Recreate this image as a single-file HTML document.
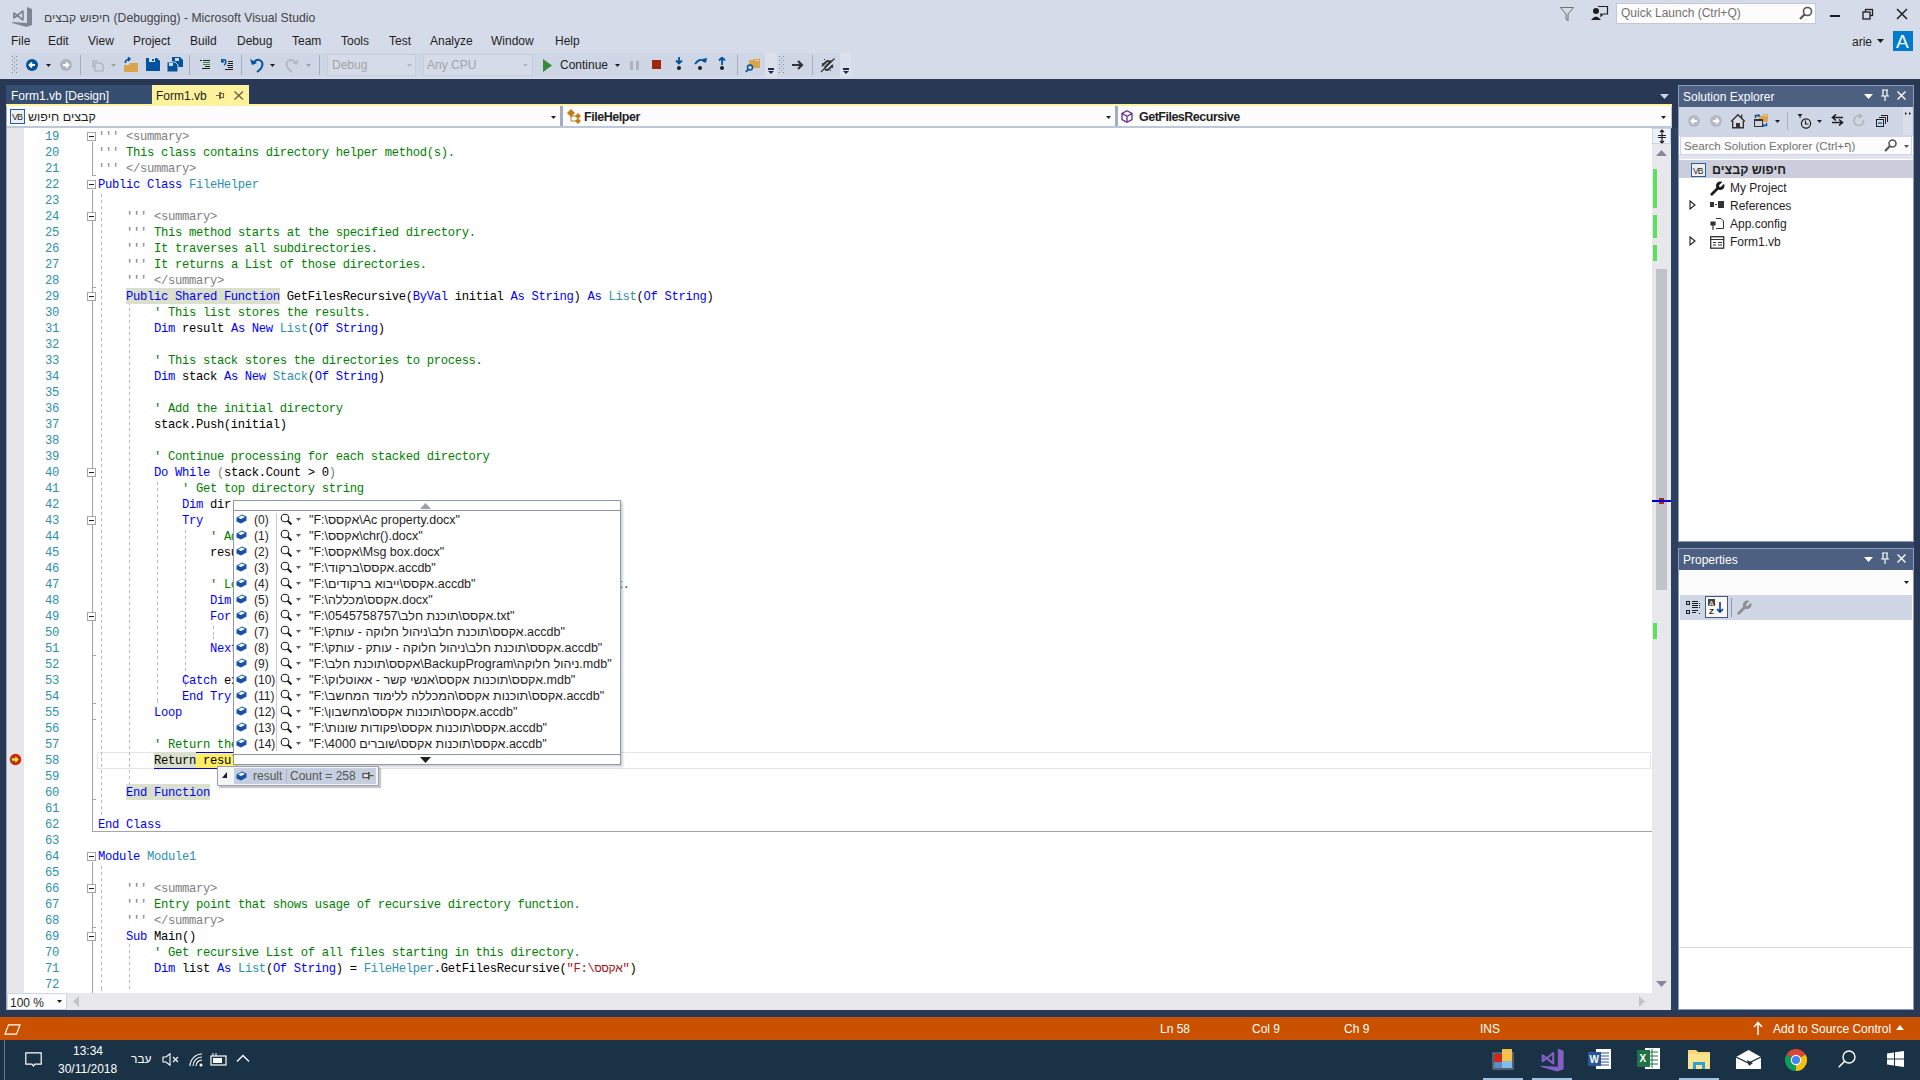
<!DOCTYPE html><html><head><meta charset="utf-8"><style>
*{margin:0;padding:0;box-sizing:border-box}
html,body{width:1920px;height:1080px;overflow:hidden;background:#293955;font-family:"Liberation Sans",sans-serif;font-size:12px;color:#1E1E1E}
.a{position:absolute;white-space:nowrap}
.code{font-family:"Liberation Mono",monospace;font-size:12.2px;letter-spacing:-0.321px;white-space:pre;line-height:16px}
.k{color:#0000FF}.t{color:#2B91AF}.c{color:#008000}.g{color:#808080}.s{color:#A31515}.p{color:#000}
.ln{color:#2B91AF;text-align:right;width:35px}
</style></head><body>
<div class="a" style="left:0px;top:0px;width:1920px;height:79px;background:#D6DBE9;"></div>
<svg class="a" style="left:8px;top:4px;" width="30" height="26" viewBox="0 0 30 26"><path d="M19 3 L24 5 V21 L18.5 23 L4 19 V18 L19 19Z" fill="#80848F"/><path d="M5.8 9 V14 L9.3 11.5Z M9.3 11.5 L15 7 V16Z" fill="none" stroke="#80848F" stroke-width="1.6" stroke-linejoin="round"/></svg>
<div class="a " style="left:44px;top:11px;font-size:12.2px;color:#444">חיפוש קבצים (Debugging) - Microsoft Visual Studio</div>
<div class="a " style="left:11px;top:34px;font-size:12px;color:#1E1E1E">File</div>
<div class="a " style="left:48px;top:34px;font-size:12px;color:#1E1E1E">Edit</div>
<div class="a " style="left:88px;top:34px;font-size:12px;color:#1E1E1E">View</div>
<div class="a " style="left:133px;top:34px;font-size:12px;color:#1E1E1E">Project</div>
<div class="a " style="left:190px;top:34px;font-size:12px;color:#1E1E1E">Build</div>
<div class="a " style="left:237px;top:34px;font-size:12px;color:#1E1E1E">Debug</div>
<div class="a " style="left:292px;top:34px;font-size:12px;color:#1E1E1E">Team</div>
<div class="a " style="left:341px;top:34px;font-size:12px;color:#1E1E1E">Tools</div>
<div class="a " style="left:389px;top:34px;font-size:12px;color:#1E1E1E">Test</div>
<div class="a " style="left:430px;top:34px;font-size:12px;color:#1E1E1E">Analyze</div>
<div class="a " style="left:491px;top:34px;font-size:12px;color:#1E1E1E">Window</div>
<div class="a " style="left:555px;top:34px;font-size:12px;color:#1E1E1E">Help</div>
<svg class="a" style="left:1559px;top:6px;" width="16" height="16" viewBox="0 0 16 16"><path d="M1.5 1.5 H14.5 L9 8 V15 L7 13 V8 Z" fill="none" stroke="#717171" stroke-width="1"/></svg>
<svg class="a" style="left:1591px;top:5px;" width="18" height="16" viewBox="0 0 18 16"><circle cx="5" cy="6" r="3" fill="#1E1E1E"/><path d="M0 15 Q5 8 10 15Z" fill="#1E1E1E"/><path d="M7 1.5 H16.5 V9 H12 L10 11 V9 H9" fill="none" stroke="#1E1E1E" stroke-width="1.2"/></svg>
<div class="a" style="left:1616px;top:3px;width:200px;height:21px;background:#FCFCFC;border:1px solid #C2C8D6"></div>
<div class="a " style="left:1621px;top:6px;font-size:12px;color:#717171">Quick Launch (Ctrl+Q)</div>
<svg class="a" style="left:1799px;top:6px;" width="14" height="14" viewBox="0 0 14 14"><circle cx="8.5" cy="5.5" r="4" fill="none" stroke="#555" stroke-width="1.6"/><path d="M5.5 8.5 L1 13" stroke="#555" stroke-width="2.2"/></svg>
<div class="a" style="left:1830px;top:15px;width:10px;height:2px;background:#1E1E1E;"></div>
<svg class="a" style="left:1862px;top:8px;" width="12" height="12" viewBox="0 0 12 12"><rect x="3.5" y="1.5" width="7" height="6" fill="none" stroke="#1E1E1E" stroke-width="1.3"/><rect x="1" y="4" width="7" height="7" fill="#D6DBE9" stroke="#1E1E1E" stroke-width="1.3"/></svg>
<svg class="a" style="left:1896px;top:8px;" width="12" height="12" viewBox="0 0 12 12"><path d="M1 1 L11 11 M11 1 L1 11" stroke="#1E1E1E" stroke-width="1.5"/></svg>
<div class="a " style="left:1852px;top:35px;font-size:12px;color:#1E1E1E">arie</div>
<svg class="a" style="left:1877px;top:39px;" width="8" height="5" viewBox="0 0 8 5"><path d="M0 0 H7 L3.5 4Z" fill="#1E1E1E"/></svg>
<div class="a" style="left:1893px;top:31px;width:20px;height:20px;background:#007ACC;"></div>
<div class="a " style="left:1896px;top:31px;font-size:19px;color:#fff;font-weight:normal">A</div>
<div class="a" style="left:10px;top:53px;width:755px;height:24px;background:#CFD6E5;"></div>
<div class="a" style="left:765px;top:53px;width:12px;height:24px;background:#DDE1EC;"></div>
<div class="a" style="left:777px;top:53px;width:63px;height:24px;background:#CFD6E5;"></div>
<div class="a" style="left:840px;top:53px;width:11px;height:24px;background:#DDE1EC;"></div>
<svg class="a" style="left:12px;top:56px;" width="5" height="18" viewBox="0 0 5 18"><rect x="0" y="0" width="1" height="1" fill="#7D8597"/><rect x="4" y="0" width="1" height="1" fill="#7D8597"/><rect x="2" y="2" width="1" height="1" fill="#7D8597"/><rect x="0" y="4" width="1" height="1" fill="#7D8597"/><rect x="4" y="4" width="1" height="1" fill="#7D8597"/><rect x="2" y="6" width="1" height="1" fill="#7D8597"/><rect x="0" y="8" width="1" height="1" fill="#7D8597"/><rect x="4" y="8" width="1" height="1" fill="#7D8597"/><rect x="2" y="10" width="1" height="1" fill="#7D8597"/><rect x="0" y="12" width="1" height="1" fill="#7D8597"/><rect x="4" y="12" width="1" height="1" fill="#7D8597"/><rect x="2" y="14" width="1" height="1" fill="#7D8597"/><rect x="0" y="16" width="1" height="1" fill="#7D8597"/><rect x="4" y="16" width="1" height="1" fill="#7D8597"/></svg>
<svg class="a" style="left:779px;top:56px;" width="5" height="18" viewBox="0 0 5 18"><rect x="0" y="0" width="1" height="1" fill="#7D8597"/><rect x="4" y="0" width="1" height="1" fill="#7D8597"/><rect x="2" y="2" width="1" height="1" fill="#7D8597"/><rect x="0" y="4" width="1" height="1" fill="#7D8597"/><rect x="4" y="4" width="1" height="1" fill="#7D8597"/><rect x="2" y="6" width="1" height="1" fill="#7D8597"/><rect x="0" y="8" width="1" height="1" fill="#7D8597"/><rect x="4" y="8" width="1" height="1" fill="#7D8597"/><rect x="2" y="10" width="1" height="1" fill="#7D8597"/><rect x="0" y="12" width="1" height="1" fill="#7D8597"/><rect x="4" y="12" width="1" height="1" fill="#7D8597"/><rect x="2" y="14" width="1" height="1" fill="#7D8597"/><rect x="0" y="16" width="1" height="1" fill="#7D8597"/><rect x="4" y="16" width="1" height="1" fill="#7D8597"/></svg>
<svg class="a" style="left:26px;top:59px;" width="12" height="12" viewBox="0 0 12 12"><circle cx="6" cy="6" r="6" fill="#00539C"/><path d="M9 6 H4 M6 3.5 L3.5 6 L6 8.5" stroke="#fff" stroke-width="1.8" fill="none"/></svg>
<svg class="a" style="left:46px;top:64px;" width="6" height="4" viewBox="0 0 6 4"><path d="M0 0 H5 L2.5 3Z" fill="#1E1E1E"/></svg>
<svg class="a" style="left:60px;top:59px;" width="12" height="12" viewBox="0 0 12 12"><circle cx="6" cy="6" r="6" fill="#AEB3BD"/><path d="M3 6 H8 M6 3.5 L8.5 6 L6 8.5" stroke="#fff" stroke-width="1.8" fill="none"/></svg>
<div class="a" style="left:80px;top:55px;width:1px;height:20px;background:#A5AEBE;"></div>
<svg class="a" style="left:90px;top:58px;" width="14" height="14" viewBox="0 0 14 14"><path d="M5 5 H11 L13 7 V13 H5Z M8 3 H3 V10" fill="none" stroke="#A8ADB8" stroke-width="1.2"/></svg>
<svg class="a" style="left:111px;top:64px;" width="6" height="4" viewBox="0 0 6 4"><path d="M0 0 H5 L2.5 3Z" fill="#9A9FA9"/></svg>
<svg class="a" style="left:123px;top:57px;" width="16" height="16" viewBox="0 0 16 16"><path d="M1 8 H6 L7 6 H15 V15 H1Z" fill="#DCA34F"/><path d="M2 6 Q3 2 7 2 M5 0 L7 2 L5 4" fill="none" stroke="#00539C" stroke-width="1.5"/></svg>
<svg class="a" style="left:146px;top:57px;" width="14" height="14" viewBox="0 0 14 14"><path d="M0 1 H11 L14 4 V14 H0Z" fill="#00539C"/><rect x="3" y="1" width="6" height="4" fill="#D6DBE9"/><rect x="6" y="2" width="2" height="2" fill="#00539C"/></svg>
<svg class="a" style="left:167px;top:57px;" width="16" height="15" viewBox="0 0 16 15"><path d="M5 0 H13 L16 3 V10 H5Z" fill="#00539C"/><path d="M0 5 H8 L11 8 V15 H0Z" fill="#00539C" stroke="#CFD6E5" stroke-width="1"/><rect x="8" y="1" width="4" height="3" fill="#D6DBE9"/><rect x="2" y="6" width="4" height="3" fill="#D6DBE9"/></svg>
<div class="a" style="left:189px;top:55px;width:1px;height:20px;background:#A5AEBE;"></div>
<svg class="a" style="left:195px;top:54px;" width="45" height="22" viewBox="0 0 45 22"><rect x="5" y="6" width="2" height="1" fill="#1E1E1E"/><rect x="8" y="6" width="7" height="1" fill="#1E1E1E"/><rect x="8" y="8" width="7" height="1" fill="#388A34"/><rect x="8" y="10" width="7" height="1" fill="#388A34"/><rect x="10" y="12" width="5" height="1" fill="#1E1E1E"/><rect x="7" y="14" width="8" height="1" fill="#1E1E1E"/><rect x="33" y="7" width="5" height="1" fill="#1E1E1E"/><rect x="33" y="9" width="5" height="1" fill="#1E1E1E"/><rect x="32" y="11" width="6" height="1" fill="#1E1E1E"/><rect x="33" y="13" width="5" height="1" fill="#1E1E1E"/><rect x="30" y="15" width="8" height="1" fill="#1E1E1E"/><path d="M27 6 Q31 5 31 8 Q31 10 29 11" fill="none" stroke="#00539C" stroke-width="1.4"/><path d="M26 4.5 V8.5 H30Z" fill="#00539C"/></svg>
<div class="a" style="left:241px;top:55px;width:1px;height:20px;background:#A5AEBE;"></div>
<svg class="a" style="left:250px;top:57px;" width="14" height="16" viewBox="0 0 14 16"><path d="M3 6 Q8 0 12 5 Q14 10 7 15" fill="none" stroke="#00539C" stroke-width="2"/><path d="M0 2 L2 8 L7 6Z" fill="#00539C"/></svg>
<svg class="a" style="left:270px;top:64px;" width="6" height="4" viewBox="0 0 6 4"><path d="M0 0 H5 L2.5 3Z" fill="#1E1E1E"/></svg>
<svg class="a" style="left:285px;top:57px;" width="14" height="16" viewBox="0 0 14 16"><path d="M11 6 Q6 0 2 5 Q0 10 7 15" fill="none" stroke="#B5B9C3" stroke-width="2"/><path d="M14 2 L12 8 L7 6Z" fill="#B5B9C3"/></svg>
<svg class="a" style="left:306px;top:64px;" width="6" height="4" viewBox="0 0 6 4"><path d="M0 0 H5 L2.5 3Z" fill="#9A9FA9"/></svg>
<div class="a" style="left:319px;top:55px;width:1px;height:20px;background:#A5AEBE;"></div>
<div class="a" style="left:327px;top:54px;width:89px;height:22px;background:#D6DBE9;border:1px solid #C6CCD8"></div>
<div class="a " style="left:332px;top:58px;font-size:12px;color:#A2A4A5">Debug</div>
<svg class="a" style="left:407px;top:64px;" width="6" height="4" viewBox="0 0 6 4"><path d="M0 0 H5 L2.5 3Z" fill="#B2B6BE"/></svg>
<div class="a" style="left:423px;top:54px;width:110px;height:22px;background:#D6DBE9;border:1px solid #C6CCD8"></div>
<div class="a " style="left:427px;top:58px;font-size:12px;color:#A2A4A5">Any CPU</div>
<svg class="a" style="left:523px;top:64px;" width="6" height="4" viewBox="0 0 6 4"><path d="M0 0 H5 L2.5 3Z" fill="#B2B6BE"/></svg>
<svg class="a" style="left:543px;top:59px;" width="9" height="13" viewBox="0 0 9 13"><path d="M0 0 L9 6.5 L0 13Z" fill="#388A34"/></svg>
<div class="a " style="left:560px;top:58px;font-size:12px;color:#1E1E1E">Continue</div>
<svg class="a" style="left:615px;top:64px;" width="6" height="4" viewBox="0 0 6 4"><path d="M0 0 H5 L2.5 3Z" fill="#1E1E1E"/></svg>
<div class="a" style="left:630px;top:61px;width:3px;height:9px;background:#AEB3BD;"></div>
<div class="a" style="left:636px;top:61px;width:3px;height:9px;background:#AEB3BD;"></div>
<div class="a" style="left:652px;top:60px;width:9px;height:9px;background:#A1260D;"></div>
<svg class="a" style="left:675px;top:57px;" width="8" height="14" viewBox="0 0 8 14"><path d="M4 0 V6 M1 3.5 L4 6.5 L7 3.5" fill="none" stroke="#00539C" stroke-width="1.8"/><circle cx="4" cy="11" r="2" fill="#1E1E1E"/></svg>
<svg class="a" style="left:694px;top:57px;" width="14" height="14" viewBox="0 0 14 14"><path d="M1 7 Q6 0 11 5" fill="none" stroke="#00539C" stroke-width="1.8"/><path d="M8 2 L12 6 L13 1Z" fill="#00539C"/><circle cx="6" cy="11" r="2" fill="#1E1E1E"/></svg>
<svg class="a" style="left:718px;top:57px;" width="8" height="14" viewBox="0 0 8 14"><path d="M4 8 V1 M1 3.5 L4 0.5 L7 3.5" fill="none" stroke="#00539C" stroke-width="1.8"/><circle cx="4" cy="11" r="2" fill="#1E1E1E"/></svg>
<div class="a" style="left:737px;top:55px;width:1px;height:20px;background:#A5AEBE;"></div>
<svg class="a" style="left:745px;top:57px;" width="16" height="16" viewBox="0 0 16 16"><path d="M4 3 H8 L9 2 H15 V11 H4Z" fill="#DCA34F"/><rect x="10" y="3" width="4" height="1" fill="#F0D9A8"/><circle cx="5" cy="10.5" r="2.5" fill="#CFD6E5" stroke="#00539C" stroke-width="1.4"/><path d="M3.3 12.3 L0.8 14.8" stroke="#00539C" stroke-width="1.8"/></svg>
<svg class="a" style="left:768px;top:67px;" width="7" height="8" viewBox="0 0 7 8"><rect x="0" y="1" width="6" height="2" fill="#1E2A45"/><path d="M0 4 H6 L3 7Z" fill="#1E2A45"/></svg>
<svg class="a" style="left:792px;top:60px;" width="12" height="10" viewBox="0 0 12 10"><path d="M0 5 H10 M6 1 L10 5 L6 9" fill="none" stroke="#333" stroke-width="2.2"/></svg>
<div class="a" style="left:812px;top:55px;width:1px;height:20px;background:#A5AEBE;"></div>
<svg class="a" style="left:819px;top:57px;" width="17" height="16" viewBox="0 0 17 16"><path d="M3 9 L7 5 Q9 3 11 5 L11.5 5.5 M6 12 Q8 14 10 12 L14 8" fill="none" stroke="#333" stroke-width="1.8"/><path d="M5.5 10.5 L12.5 3.5" stroke="#333" stroke-width="1.6"/><path d="M2 15 L15.5 1.5" stroke="#333" stroke-width="1.3"/><rect x="3" y="6" width="1" height="1" fill="#333"/><rect x="13" y="10" width="1" height="1" fill="#333"/><rect x="11" y="13" width="1" height="1" fill="#333"/><rect x="5" y="2" width="1" height="1" fill="#333"/></svg>
<svg class="a" style="left:843px;top:67px;" width="7" height="8" viewBox="0 0 7 8"><rect x="0" y="1" width="6" height="2" fill="#1E2A45"/><path d="M0 4 H6 L3 7Z" fill="#1E2A45"/></svg>
<div class="a" style="left:6px;top:85px;width:146px;height:19px;background:#364E6F;"></div>
<div class="a " style="left:11px;top:89px;font-size:12px;color:#FFFFFF">Form1.vb [Design]</div>
<div class="a" style="left:152px;top:85px;width:97px;height:19px;background:#FFF29D;"></div>
<div class="a " style="left:156px;top:89px;font-size:12px;color:#1E1E1E">Form1.vb</div>
<svg class="a" style="left:216px;top:92px;" width="9" height="8" viewBox="0 0 9 8"><path d="M0 3.5 H3" stroke="#6F6446" stroke-width="1"/><rect x="3" y="0" width="2" height="7" fill="#6F6446"/><path d="M5 1.5 H7.5 V5.5 H5" fill="none" stroke="#6F6446" stroke-width="1.2"/></svg>
<svg class="a" style="left:234px;top:91px;" width="10" height="9" viewBox="0 0 10 9"><path d="M0.5 0.5 L9 8.5 M9 0.5 L0.5 8.5" stroke="#6F6446" stroke-width="1.4"/></svg>
<svg class="a" style="left:1660px;top:94px;" width="10" height="6" viewBox="0 0 10 6"><path d="M0 0 H9 L4.5 5Z" fill="#CED4DD"/></svg>
<div class="a" style="left:6px;top:104px;width:1666px;height:2px;background:#FFF29D;"></div>
<div class="a" style="left:6px;top:106px;width:1666px;height:22px;background:#BCC7D8;"></div>
<div class="a" style="left:7px;top:106px;width:553px;height:20px;background:#FCFCFC;"></div>
<div class="a" style="left:563px;top:106px;width:553px;height:20px;background:#FCFCFC;"></div>
<div class="a" style="left:1118px;top:106px;width:553px;height:20px;background:#FCFCFC;"></div>
<div class="a" style="left:560px;top:106px;width:3px;height:20px;background:#A4AEC2;"></div>
<div class="a" style="left:1115px;top:106px;width:3px;height:20px;background:#A4AEC2;"></div>
<svg class="a" style="left:10px;top:109px;" width="15" height="15" viewBox="0 0 15 15"><rect x="0.5" y="0.5" width="14" height="14" fill="#F0EFF1" stroke="#1F5FA8" stroke-width="1"/><text x="2" y="11" font-size="9" font-family="Liberation Sans" fill="#1E1E1E" letter-spacing="-1">VB</text></svg>
<div class="a " style="left:28px;top:110px;font-size:12.5px;color:#1E1E1E">קבצים חיפוש</div>
<svg class="a" style="left:551px;top:116px;" width="6" height="4" viewBox="0 0 6 4"><path d="M0 0 H5 L2.5 3Z" fill="#1E1E1E"/></svg>
<svg class="a" style="left:567px;top:109px;" width="15" height="15" viewBox="0 0 15 15"><path d="M4 0 L8 4 L4 8 L0 4Z" fill="#C27D1A"/><path d="M11 4 L14 7 L11 10 L8 7Z M11 9 L14 12 L11 15 L8 12Z" fill="#C27D1A"/><path d="M4 6 V12 H9 M4 7 H9" fill="none" stroke="#C27D1A" stroke-width="1"/></svg>
<div class="a " style="left:584px;top:110px;font-size:12.5px;color:#1E1E1E;font-weight:bold;letter-spacing:-0.45px">FileHelper</div>
<svg class="a" style="left:1106px;top:116px;" width="6" height="4" viewBox="0 0 6 4"><path d="M0 0 H5 L2.5 3Z" fill="#1E1E1E"/></svg>
<svg class="a" style="left:1121px;top:110px;" width="12" height="13" viewBox="0 0 12 13"><path d="M6 0.8 L11 3.5 V9.5 L6 12.2 L1 9.5 V3.5Z M1 3.5 L6 6.3 L11 3.5 M6 6.3 V12.2" fill="none" stroke="#652D90" stroke-width="1.3"/></svg>
<div class="a " style="left:1139px;top:110px;font-size:12.5px;color:#1E1E1E;font-weight:bold;letter-spacing:-0.5px">GetFilesRecursive</div>
<svg class="a" style="left:1661px;top:116px;" width="6" height="4" viewBox="0 0 6 4"><path d="M0 0 H5 L2.5 3Z" fill="#1E1E1E"/></svg>
<div class="a" style="left:7px;top:128px;width:1645px;height:865px;background:#FFFFFF;"></div>
<div class="a" style="left:7px;top:128px;width:17px;height:865px;background:#E6E7E8;"></div>
<div class="a" style="left:6px;top:106px;width:1px;height:904px;background:#9FAAC4;"></div>
<div class="a" style="left:1652px;top:128px;width:19px;height:865px;background:#E8E8EC;"></div>
<div class="a" style="left:1652px;top:128px;width:19px;height:16px;background:#EEF1FA;border:1px solid #CCD5E6"></div>
<svg class="a" style="left:1654px;top:129px;" width="16" height="15" viewBox="0 0 16 15"><path d="M8 1 V14 M4 6.5 H12 M4 8.5 H12 M6 3 L8 1 L10 3 M6 12 L8 14 L10 12" fill="none" stroke="#1E1E1E" stroke-width="1.2"/></svg>
<svg class="a" style="left:1656px;top:150px;" width="11" height="6" viewBox="0 0 11 6"><path d="M0 6 L5.5 0 L11 6Z" fill="#868999"/></svg>
<svg class="a" style="left:1656px;top:981px;" width="11" height="6" viewBox="0 0 11 6"><path d="M0 0 L5.5 6 L11 0Z" fill="#868999"/></svg>
<div class="a" style="left:1656px;top:269px;width:11px;height:321px;background:#C2C3C9;"></div>
<div class="a" style="left:1653px;top:169px;width:4px;height:39px;background:#5FDF5F;"></div>
<div class="a" style="left:1653px;top:215px;width:4px;height:23px;background:#5FDF5F;"></div>
<div class="a" style="left:1653px;top:245px;width:4px;height:16px;background:#5FDF5F;"></div>
<div class="a" style="left:1653px;top:623px;width:4px;height:16px;background:#5FDF5F;"></div>
<div class="a" style="left:1659px;top:498px;width:5px;height:6px;background:#A3262A;"></div>
<div class="a" style="left:1652px;top:500px;width:19px;height:2px;background:#0000CD;"></div>
<div class="a" style="left:7px;top:993px;width:1664px;height:17px;background:#E8E8EC;"></div>
<div class="a" style="left:7px;top:993px;width:60px;height:17px;background:#FCFCFC;border:1px solid #CCD5E6"></div>
<div class="a " style="left:10px;top:996px;font-size:12px;color:#1E1E1E">100 %</div>
<svg class="a" style="left:57px;top:1000px;" width="6" height="4" viewBox="0 0 6 4"><path d="M0 0 H5 L2.5 3Z" fill="#1E1E1E"/></svg>
<svg class="a" style="left:73px;top:996px;" width="6" height="11" viewBox="0 0 6 11"><path d="M6 0 L0 5.5 L6 11Z" fill="#C2C3C9"/></svg>
<svg class="a" style="left:1639px;top:996px;" width="6" height="11" viewBox="0 0 6 11"><path d="M0 0 L6 5.5 L0 11Z" fill="#C2C3C9"/></svg>
<div class="a" style="left:1652px;top:993px;width:19px;height:17px;background:#E8E8EC;"></div>
<div class="a" style="left:97px;top:752px;width:1554px;height:17px;background:transparent;border:1px solid #E4E4EC"></div>
<div class="a" style="left:126px;top:288px;width:154px;height:16px;background:#DBE0CC;"></div>
<div class="a" style="left:126px;top:784px;width:84px;height:16px;background:#DBE0CC;"></div>
<div class="a" style="left:154px;top:752px;width:42px;height:16px;background:#DBE0CC;"></div>
<div class="a" style="left:196px;top:752px;width:42px;height:16px;background:#FFEE62;"></div>
<div class="a" style="left:154px;top:768px;width:84px;height:1px;background:#0000FF;"></div>
<div class="a" style="left:196px;top:752px;width:45px;height:1px;background:#0000FF;"></div>
<div class="a" style="left:101px;top:192px;width:1px;height:624px;background:repeating-linear-gradient(#B8B8B8 0 3px,transparent 3px 6px);background-position:0 -4px"></div>
<div class="a" style="left:129px;top:304px;width:1px;height:480px;background:repeating-linear-gradient(#B8B8B8 0 3px,transparent 3px 6px);background-position:0 -2px"></div>
<div class="a" style="left:157px;top:480px;width:1px;height:224px;background:repeating-linear-gradient(#B8B8B8 0 3px,transparent 3px 6px);background-position:0 -4px"></div>
<div class="a" style="left:185px;top:528px;width:1px;height:160px;background:repeating-linear-gradient(#B8B8B8 0 3px,transparent 3px 6px);background-position:0 -4px"></div>
<div class="a" style="left:213px;top:624px;width:1px;height:16px;background:repeating-linear-gradient(#B8B8B8 0 3px,transparent 3px 6px);background-position:0 -4px"></div>
<div class="a" style="left:101px;top:864px;width:1px;height:128px;background:repeating-linear-gradient(#B8B8B8 0 3px,transparent 3px 6px);background-position:0 -4px"></div>
<div class="a" style="left:129px;top:944px;width:1px;height:48px;background:repeating-linear-gradient(#B8B8B8 0 3px,transparent 3px 6px);background-position:0 0px"></div>
<div class="a" style="left:92px;top:142px;width:1px;height:34px;background:#A5A5A5;"></div>
<div class="a" style="left:92px;top:175px;width:4px;height:1px;background:#A5A5A5;"></div>
<div class="a" style="left:92px;top:190px;width:1px;height:642px;background:#A5A5A5;"></div>
<div class="a" style="left:92px;top:831px;width:4px;height:1px;background:#A5A5A5;"></div>
<div class="a" style="left:92px;top:222px;width:1px;height:66px;background:#A5A5A5;"></div>
<div class="a" style="left:92px;top:287px;width:4px;height:1px;background:#A5A5A5;"></div>
<div class="a" style="left:92px;top:302px;width:1px;height:498px;background:#A5A5A5;"></div>
<div class="a" style="left:92px;top:799px;width:4px;height:1px;background:#A5A5A5;"></div>
<div class="a" style="left:92px;top:478px;width:1px;height:242px;background:#A5A5A5;"></div>
<div class="a" style="left:92px;top:719px;width:4px;height:1px;background:#A5A5A5;"></div>
<div class="a" style="left:92px;top:526px;width:1px;height:178px;background:#A5A5A5;"></div>
<div class="a" style="left:92px;top:703px;width:4px;height:1px;background:#A5A5A5;"></div>
<div class="a" style="left:92px;top:622px;width:1px;height:34px;background:#A5A5A5;"></div>
<div class="a" style="left:92px;top:655px;width:4px;height:1px;background:#A5A5A5;"></div>
<div class="a" style="left:92px;top:862px;width:1px;height:131px;background:#A5A5A5;"></div>
<div class="a" style="left:92px;top:894px;width:1px;height:34px;background:#A5A5A5;"></div>
<div class="a" style="left:92px;top:927px;width:4px;height:1px;background:#A5A5A5;"></div>
<div class="a" style="left:92px;top:942px;width:1px;height:51px;background:#A5A5A5;"></div>
<div class="a" style="left:87px;top:132px;width:9px;height:9px;background:#FFFFFF;border:1px solid #A5A5A5"></div>
<div class="a" style="left:89px;top:136px;width:5px;height:1px;background:#1E1E1E;"></div>
<div class="a" style="left:87px;top:180px;width:9px;height:9px;background:#FFFFFF;border:1px solid #A5A5A5"></div>
<div class="a" style="left:89px;top:184px;width:5px;height:1px;background:#1E1E1E;"></div>
<div class="a" style="left:87px;top:212px;width:9px;height:9px;background:#FFFFFF;border:1px solid #A5A5A5"></div>
<div class="a" style="left:89px;top:216px;width:5px;height:1px;background:#1E1E1E;"></div>
<div class="a" style="left:87px;top:292px;width:9px;height:9px;background:#FFFFFF;border:1px solid #A5A5A5"></div>
<div class="a" style="left:89px;top:296px;width:5px;height:1px;background:#1E1E1E;"></div>
<div class="a" style="left:87px;top:468px;width:9px;height:9px;background:#FFFFFF;border:1px solid #A5A5A5"></div>
<div class="a" style="left:89px;top:472px;width:5px;height:1px;background:#1E1E1E;"></div>
<div class="a" style="left:87px;top:516px;width:9px;height:9px;background:#FFFFFF;border:1px solid #A5A5A5"></div>
<div class="a" style="left:89px;top:520px;width:5px;height:1px;background:#1E1E1E;"></div>
<div class="a" style="left:87px;top:612px;width:9px;height:9px;background:#FFFFFF;border:1px solid #A5A5A5"></div>
<div class="a" style="left:89px;top:616px;width:5px;height:1px;background:#1E1E1E;"></div>
<div class="a" style="left:87px;top:852px;width:9px;height:9px;background:#FFFFFF;border:1px solid #A5A5A5"></div>
<div class="a" style="left:89px;top:856px;width:5px;height:1px;background:#1E1E1E;"></div>
<div class="a" style="left:87px;top:884px;width:9px;height:9px;background:#FFFFFF;border:1px solid #A5A5A5"></div>
<div class="a" style="left:89px;top:888px;width:5px;height:1px;background:#1E1E1E;"></div>
<div class="a" style="left:87px;top:932px;width:9px;height:9px;background:#FFFFFF;border:1px solid #A5A5A5"></div>
<div class="a" style="left:89px;top:936px;width:5px;height:1px;background:#1E1E1E;"></div>
<div class="a" style="left:96px;top:831px;width:1556px;height:1px;background:#A5A5A5;"></div>
<div class="a code" style="left:0;top:0">
<div class="a ln" style="left:24px;top:129px">19</div>
<div class="a ln" style="left:24px;top:145px">20</div>
<div class="a ln" style="left:24px;top:161px">21</div>
<div class="a ln" style="left:24px;top:177px">22</div>
<div class="a ln" style="left:24px;top:193px">23</div>
<div class="a ln" style="left:24px;top:209px">24</div>
<div class="a ln" style="left:24px;top:225px">25</div>
<div class="a ln" style="left:24px;top:241px">26</div>
<div class="a ln" style="left:24px;top:257px">27</div>
<div class="a ln" style="left:24px;top:273px">28</div>
<div class="a ln" style="left:24px;top:289px">29</div>
<div class="a ln" style="left:24px;top:305px">30</div>
<div class="a ln" style="left:24px;top:321px">31</div>
<div class="a ln" style="left:24px;top:337px">32</div>
<div class="a ln" style="left:24px;top:353px">33</div>
<div class="a ln" style="left:24px;top:369px">34</div>
<div class="a ln" style="left:24px;top:385px">35</div>
<div class="a ln" style="left:24px;top:401px">36</div>
<div class="a ln" style="left:24px;top:417px">37</div>
<div class="a ln" style="left:24px;top:433px">38</div>
<div class="a ln" style="left:24px;top:449px">39</div>
<div class="a ln" style="left:24px;top:465px">40</div>
<div class="a ln" style="left:24px;top:481px">41</div>
<div class="a ln" style="left:24px;top:497px">42</div>
<div class="a ln" style="left:24px;top:513px">43</div>
<div class="a ln" style="left:24px;top:529px">44</div>
<div class="a ln" style="left:24px;top:545px">45</div>
<div class="a ln" style="left:24px;top:561px">46</div>
<div class="a ln" style="left:24px;top:577px">47</div>
<div class="a ln" style="left:24px;top:593px">48</div>
<div class="a ln" style="left:24px;top:609px">49</div>
<div class="a ln" style="left:24px;top:625px">50</div>
<div class="a ln" style="left:24px;top:641px">51</div>
<div class="a ln" style="left:24px;top:657px">52</div>
<div class="a ln" style="left:24px;top:673px">53</div>
<div class="a ln" style="left:24px;top:689px">54</div>
<div class="a ln" style="left:24px;top:705px">55</div>
<div class="a ln" style="left:24px;top:721px">56</div>
<div class="a ln" style="left:24px;top:737px">57</div>
<div class="a ln" style="left:24px;top:753px">58</div>
<div class="a ln" style="left:24px;top:769px">59</div>
<div class="a ln" style="left:24px;top:785px">60</div>
<div class="a ln" style="left:24px;top:801px">61</div>
<div class="a ln" style="left:24px;top:817px">62</div>
<div class="a ln" style="left:24px;top:833px">63</div>
<div class="a ln" style="left:24px;top:849px">64</div>
<div class="a ln" style="left:24px;top:865px">65</div>
<div class="a ln" style="left:24px;top:881px">66</div>
<div class="a ln" style="left:24px;top:897px">67</div>
<div class="a ln" style="left:24px;top:913px">68</div>
<div class="a ln" style="left:24px;top:929px">69</div>
<div class="a ln" style="left:24px;top:945px">70</div>
<div class="a ln" style="left:24px;top:961px">71</div>
<div class="a ln" style="left:24px;top:977px">72</div>
<div class="a" style="left:98px;top:129px;white-space:pre"><span class="g">&#x27;&#x27;&#x27; &lt;summary&gt;</span></div>
<div class="a" style="left:98px;top:145px;white-space:pre"><span class="g">&#x27;&#x27;&#x27; </span><span class="c">This class contains directory helper method(s).</span></div>
<div class="a" style="left:98px;top:161px;white-space:pre"><span class="g">&#x27;&#x27;&#x27; &lt;/summary&gt;</span></div>
<div class="a" style="left:98px;top:177px;white-space:pre"><span class="k">Public Class </span><span class="t">FileHelper</span></div>
<div class="a" style="left:98px;top:209px;white-space:pre"><span class="p">    </span><span class="g">&#x27;&#x27;&#x27; &lt;summary&gt;</span></div>
<div class="a" style="left:98px;top:225px;white-space:pre"><span class="p">    </span><span class="g">&#x27;&#x27;&#x27; </span><span class="c">This method starts at the specified directory.</span></div>
<div class="a" style="left:98px;top:241px;white-space:pre"><span class="p">    </span><span class="g">&#x27;&#x27;&#x27; </span><span class="c">It traverses all subdirectories.</span></div>
<div class="a" style="left:98px;top:257px;white-space:pre"><span class="p">    </span><span class="g">&#x27;&#x27;&#x27; </span><span class="c">It returns a List of those directories.</span></div>
<div class="a" style="left:98px;top:273px;white-space:pre"><span class="p">    </span><span class="g">&#x27;&#x27;&#x27; &lt;/summary&gt;</span></div>
<div class="a" style="left:98px;top:289px;white-space:pre"><span class="p">    </span><span class="k">Public Shared Function</span><span class="p"> GetFilesRecursive(</span><span class="k">ByVal</span><span class="p"> initial </span><span class="k">As String</span><span class="p">) </span><span class="k">As </span><span class="t">List</span><span class="p">(</span><span class="k">Of String</span><span class="p">)</span></div>
<div class="a" style="left:98px;top:305px;white-space:pre"><span class="p">        </span><span class="c">&#x27; This list stores the results.</span></div>
<div class="a" style="left:98px;top:321px;white-space:pre"><span class="p">        </span><span class="k">Dim</span><span class="p"> result </span><span class="k">As New </span><span class="t">List</span><span class="p">(</span><span class="k">Of String</span><span class="p">)</span></div>
<div class="a" style="left:98px;top:353px;white-space:pre"><span class="p">        </span><span class="c">&#x27; This stack stores the directories to process.</span></div>
<div class="a" style="left:98px;top:369px;white-space:pre"><span class="p">        </span><span class="k">Dim</span><span class="p"> stack </span><span class="k">As New </span><span class="t">Stack</span><span class="p">(</span><span class="k">Of String</span><span class="p">)</span></div>
<div class="a" style="left:98px;top:401px;white-space:pre"><span class="p">        </span><span class="c">&#x27; Add the initial directory</span></div>
<div class="a" style="left:98px;top:417px;white-space:pre"><span class="p">        stack.Push(initial)</span></div>
<div class="a" style="left:98px;top:449px;white-space:pre"><span class="p">        </span><span class="c">&#x27; Continue processing for each stacked directory</span></div>
<div class="a" style="left:98px;top:465px;white-space:pre"><span class="p">        </span><span class="k">Do While </span><span class="g">(</span><span class="p">stack.Count &gt; 0</span><span class="g">)</span></div>
<div class="a" style="left:98px;top:481px;white-space:pre"><span class="p">            </span><span class="c">&#x27; Get top directory string</span></div>
<div class="a" style="left:98px;top:497px;white-space:pre"><span class="p">            </span><span class="k">Dim</span><span class="p"> dir</span></div>
<div class="a" style="left:98px;top:513px;white-space:pre"><span class="p">            </span><span class="k">Try</span></div>
<div class="a" style="left:98px;top:529px;white-space:pre"><span class="p">                </span><span class="c">&#x27; Add all immediate file paths</span></div>
<div class="a" style="left:98px;top:545px;white-space:pre"><span class="p">                result.AddRange(</span><span class="t">Directory</span><span class="p">.GetFiles(dir, </span><span class="s">&quot;*.*&quot;</span><span class="p">))</span></div>
<div class="a" style="left:98px;top:577px;white-space:pre"><span class="p">                </span><span class="c">&#x27; Loop through all subdirectories and add them to the stack.</span></div>
<div class="a" style="left:98px;top:593px;white-space:pre"><span class="p">                </span><span class="k">Dim</span><span class="p"> directoryName </span><span class="k">As String</span></div>
<div class="a" style="left:98px;top:609px;white-space:pre"><span class="p">                </span><span class="k">For Each</span><span class="p"> directoryName </span><span class="k">In </span><span class="t">Directory</span><span class="p">.GetDirectories(dir)</span></div>
<div class="a" style="left:98px;top:625px;white-space:pre"><span class="p">                    stack.Push(directoryName)</span></div>
<div class="a" style="left:98px;top:641px;white-space:pre"><span class="p">                </span><span class="k">Next</span></div>
<div class="a" style="left:98px;top:673px;white-space:pre"><span class="p">            </span><span class="k">Catch</span><span class="p"> ex </span><span class="k">As </span><span class="t">Exception</span></div>
<div class="a" style="left:98px;top:689px;white-space:pre"><span class="p">            </span><span class="k">End Try</span></div>
<div class="a" style="left:98px;top:705px;white-space:pre"><span class="p">        </span><span class="k">Loop</span></div>
<div class="a" style="left:98px;top:737px;white-space:pre"><span class="p">        </span><span class="c">&#x27; Return the list</span></div>
<div class="a" style="left:98px;top:753px;white-space:pre"><span class="p">        </span><span class="p">Return</span><span class="p"> </span><span class="p">result</span></div>
<div class="a" style="left:98px;top:785px;white-space:pre"><span class="p">    </span><span class="k">End Function</span></div>
<div class="a" style="left:98px;top:817px;white-space:pre"><span class="k">End Class</span></div>
<div class="a" style="left:98px;top:849px;white-space:pre"><span class="k">Module </span><span class="t">Module1</span></div>
<div class="a" style="left:98px;top:881px;white-space:pre"><span class="p">    </span><span class="g">&#x27;&#x27;&#x27; &lt;summary&gt;</span></div>
<div class="a" style="left:98px;top:897px;white-space:pre"><span class="p">    </span><span class="g">&#x27;&#x27;&#x27; </span><span class="c">Entry point that shows usage of recursive directory function.</span></div>
<div class="a" style="left:98px;top:913px;white-space:pre"><span class="p">    </span><span class="g">&#x27;&#x27;&#x27; &lt;/summary&gt;</span></div>
<div class="a" style="left:98px;top:929px;white-space:pre"><span class="p">    </span><span class="k">Sub</span><span class="p"> Main()</span></div>
<div class="a" style="left:98px;top:945px;white-space:pre"><span class="p">        </span><span class="c">&#x27; Get recursive List of all files starting in this directory.</span></div>
<div class="a" style="left:98px;top:961px;white-space:pre"><span class="p">        </span><span class="k">Dim</span><span class="p"> list </span><span class="k">As </span><span class="t">List</span><span class="p">(</span><span class="k">Of String</span><span class="p">) = </span><span class="t">FileHelper</span><span class="p">.GetFilesRecursive(</span><span class="s">&quot;F:\אקסס&quot;</span><span class="p">)</span></div>
</div>
<svg class="a" style="left:9px;top:753px;" width="14" height="14" viewBox="0 0 14 14"><circle cx="6.5" cy="6.5" r="5.7" fill="#E81A0A"/><path d="M2.3 4.8 H6 V2.3 L10.3 6.5 L6 10.7 V8.2 H2.3Z" fill="#FFDA2A" stroke="#4A4A3A" stroke-width="0.8"/></svg>
<div class="a" style="left:233px;top:500px;width:388px;height:265px;background:#FFFFFF;border:1px solid #8E98AD;box-shadow:2px 2px 2px rgba(0,0,0,0.18)"></div>
<div class="a" style="left:234px;top:510px;width:386px;height:1px;background:#8E98AD;"></div>
<svg class="a" style="left:420px;top:503px;" width="11" height="6" viewBox="0 0 11 6"><path d="M0 6 L5.5 0 L11 6Z" fill="#9A9FAE"/></svg>
<div class="a" style="left:234px;top:754px;width:386px;height:1px;background:#8E98AD;"></div>
<svg class="a" style="left:420px;top:757px;" width="11" height="6" viewBox="0 0 11 6"><path d="M0 0 L5.5 6 L11 0Z" fill="#1E1E1E"/></svg>
<div class="a" style="left:276px;top:513px;width:1px;height:238px;background:#C5CBD6;"></div>
<svg class="a" style="left:236px;top:514px;" width="11" height="10" viewBox="0 0 11 10"><path d="M0.5 3.5 L6 0.5 L10.5 2.5 V6.5 L5 9.5 L0.5 7.5Z" fill="#1652A6"/><path d="M2 3.6 L6 1.6 L9 3 L5 5Z" fill="#FFFFFF"/></svg>
<div class="a " style="left:254px;top:513px;font-size:12px;color:#1E1E1E">(0)</div>
<svg class="a" style="left:280px;top:513px;" width="13" height="13" viewBox="0 0 13 13"><circle cx="5" cy="5" r="3.8" fill="none" stroke="#1E1E1E" stroke-width="1.1"/><path d="M7.7 7.7 L11.5 11.5" stroke="#1E1E1E" stroke-width="2"/></svg>
<svg class="a" style="left:296px;top:518px;" width="6" height="4" viewBox="0 0 6 4"><path d="M0 0 H5 L2.5 3Z" fill="#555"/></svg>
<div class="a " style="left:309px;top:513px;font-size:12.5px;color:#1E1E1E">&quot;F:\אקסס\Ac property.docx&quot;</div>
<svg class="a" style="left:236px;top:530px;" width="11" height="10" viewBox="0 0 11 10"><path d="M0.5 3.5 L6 0.5 L10.5 2.5 V6.5 L5 9.5 L0.5 7.5Z" fill="#1652A6"/><path d="M2 3.6 L6 1.6 L9 3 L5 5Z" fill="#FFFFFF"/></svg>
<div class="a " style="left:254px;top:529px;font-size:12px;color:#1E1E1E">(1)</div>
<svg class="a" style="left:280px;top:529px;" width="13" height="13" viewBox="0 0 13 13"><circle cx="5" cy="5" r="3.8" fill="none" stroke="#1E1E1E" stroke-width="1.1"/><path d="M7.7 7.7 L11.5 11.5" stroke="#1E1E1E" stroke-width="2"/></svg>
<svg class="a" style="left:296px;top:534px;" width="6" height="4" viewBox="0 0 6 4"><path d="M0 0 H5 L2.5 3Z" fill="#555"/></svg>
<div class="a " style="left:309px;top:529px;font-size:12.5px;color:#1E1E1E">&quot;F:\אקסס\chr().docx&quot;</div>
<svg class="a" style="left:236px;top:546px;" width="11" height="10" viewBox="0 0 11 10"><path d="M0.5 3.5 L6 0.5 L10.5 2.5 V6.5 L5 9.5 L0.5 7.5Z" fill="#1652A6"/><path d="M2 3.6 L6 1.6 L9 3 L5 5Z" fill="#FFFFFF"/></svg>
<div class="a " style="left:254px;top:545px;font-size:12px;color:#1E1E1E">(2)</div>
<svg class="a" style="left:280px;top:545px;" width="13" height="13" viewBox="0 0 13 13"><circle cx="5" cy="5" r="3.8" fill="none" stroke="#1E1E1E" stroke-width="1.1"/><path d="M7.7 7.7 L11.5 11.5" stroke="#1E1E1E" stroke-width="2"/></svg>
<svg class="a" style="left:296px;top:550px;" width="6" height="4" viewBox="0 0 6 4"><path d="M0 0 H5 L2.5 3Z" fill="#555"/></svg>
<div class="a " style="left:309px;top:545px;font-size:12.5px;color:#1E1E1E">&quot;F:\אקסס\Msg box.docx&quot;</div>
<svg class="a" style="left:236px;top:562px;" width="11" height="10" viewBox="0 0 11 10"><path d="M0.5 3.5 L6 0.5 L10.5 2.5 V6.5 L5 9.5 L0.5 7.5Z" fill="#1652A6"/><path d="M2 3.6 L6 1.6 L9 3 L5 5Z" fill="#FFFFFF"/></svg>
<div class="a " style="left:254px;top:561px;font-size:12px;color:#1E1E1E">(3)</div>
<svg class="a" style="left:280px;top:561px;" width="13" height="13" viewBox="0 0 13 13"><circle cx="5" cy="5" r="3.8" fill="none" stroke="#1E1E1E" stroke-width="1.1"/><path d="M7.7 7.7 L11.5 11.5" stroke="#1E1E1E" stroke-width="2"/></svg>
<svg class="a" style="left:296px;top:566px;" width="6" height="4" viewBox="0 0 6 4"><path d="M0 0 H5 L2.5 3Z" fill="#555"/></svg>
<div class="a " style="left:309px;top:561px;font-size:12.5px;color:#1E1E1E">&quot;F:\אקסס\ברקוד.accdb&quot;</div>
<svg class="a" style="left:236px;top:578px;" width="11" height="10" viewBox="0 0 11 10"><path d="M0.5 3.5 L6 0.5 L10.5 2.5 V6.5 L5 9.5 L0.5 7.5Z" fill="#1652A6"/><path d="M2 3.6 L6 1.6 L9 3 L5 5Z" fill="#FFFFFF"/></svg>
<div class="a " style="left:254px;top:577px;font-size:12px;color:#1E1E1E">(4)</div>
<svg class="a" style="left:280px;top:577px;" width="13" height="13" viewBox="0 0 13 13"><circle cx="5" cy="5" r="3.8" fill="none" stroke="#1E1E1E" stroke-width="1.1"/><path d="M7.7 7.7 L11.5 11.5" stroke="#1E1E1E" stroke-width="2"/></svg>
<svg class="a" style="left:296px;top:582px;" width="6" height="4" viewBox="0 0 6 4"><path d="M0 0 H5 L2.5 3Z" fill="#555"/></svg>
<div class="a " style="left:309px;top:577px;font-size:12.5px;color:#1E1E1E">&quot;F:\אקסס\ייבוא ברקודים.accdb&quot;</div>
<svg class="a" style="left:236px;top:594px;" width="11" height="10" viewBox="0 0 11 10"><path d="M0.5 3.5 L6 0.5 L10.5 2.5 V6.5 L5 9.5 L0.5 7.5Z" fill="#1652A6"/><path d="M2 3.6 L6 1.6 L9 3 L5 5Z" fill="#FFFFFF"/></svg>
<div class="a " style="left:254px;top:593px;font-size:12px;color:#1E1E1E">(5)</div>
<svg class="a" style="left:280px;top:593px;" width="13" height="13" viewBox="0 0 13 13"><circle cx="5" cy="5" r="3.8" fill="none" stroke="#1E1E1E" stroke-width="1.1"/><path d="M7.7 7.7 L11.5 11.5" stroke="#1E1E1E" stroke-width="2"/></svg>
<svg class="a" style="left:296px;top:598px;" width="6" height="4" viewBox="0 0 6 4"><path d="M0 0 H5 L2.5 3Z" fill="#555"/></svg>
<div class="a " style="left:309px;top:593px;font-size:12.5px;color:#1E1E1E">&quot;F:\אקסס\מכללה.docx&quot;</div>
<svg class="a" style="left:236px;top:610px;" width="11" height="10" viewBox="0 0 11 10"><path d="M0.5 3.5 L6 0.5 L10.5 2.5 V6.5 L5 9.5 L0.5 7.5Z" fill="#1652A6"/><path d="M2 3.6 L6 1.6 L9 3 L5 5Z" fill="#FFFFFF"/></svg>
<div class="a " style="left:254px;top:609px;font-size:12px;color:#1E1E1E">(6)</div>
<svg class="a" style="left:280px;top:609px;" width="13" height="13" viewBox="0 0 13 13"><circle cx="5" cy="5" r="3.8" fill="none" stroke="#1E1E1E" stroke-width="1.1"/><path d="M7.7 7.7 L11.5 11.5" stroke="#1E1E1E" stroke-width="2"/></svg>
<svg class="a" style="left:296px;top:614px;" width="6" height="4" viewBox="0 0 6 4"><path d="M0 0 H5 L2.5 3Z" fill="#555"/></svg>
<div class="a " style="left:309px;top:609px;font-size:12.5px;color:#1E1E1E">&quot;F:\אקסס\תוכנת חלב\0545758757.txt&quot;</div>
<svg class="a" style="left:236px;top:626px;" width="11" height="10" viewBox="0 0 11 10"><path d="M0.5 3.5 L6 0.5 L10.5 2.5 V6.5 L5 9.5 L0.5 7.5Z" fill="#1652A6"/><path d="M2 3.6 L6 1.6 L9 3 L5 5Z" fill="#FFFFFF"/></svg>
<div class="a " style="left:254px;top:625px;font-size:12px;color:#1E1E1E">(7)</div>
<svg class="a" style="left:280px;top:625px;" width="13" height="13" viewBox="0 0 13 13"><circle cx="5" cy="5" r="3.8" fill="none" stroke="#1E1E1E" stroke-width="1.1"/><path d="M7.7 7.7 L11.5 11.5" stroke="#1E1E1E" stroke-width="2"/></svg>
<svg class="a" style="left:296px;top:630px;" width="6" height="4" viewBox="0 0 6 4"><path d="M0 0 H5 L2.5 3Z" fill="#555"/></svg>
<div class="a " style="left:309px;top:625px;font-size:12.5px;color:#1E1E1E">&quot;F:\אקסס\תוכנת חלב\ניהול חלוקה - עותק.accdb&quot;</div>
<svg class="a" style="left:236px;top:642px;" width="11" height="10" viewBox="0 0 11 10"><path d="M0.5 3.5 L6 0.5 L10.5 2.5 V6.5 L5 9.5 L0.5 7.5Z" fill="#1652A6"/><path d="M2 3.6 L6 1.6 L9 3 L5 5Z" fill="#FFFFFF"/></svg>
<div class="a " style="left:254px;top:641px;font-size:12px;color:#1E1E1E">(8)</div>
<svg class="a" style="left:280px;top:641px;" width="13" height="13" viewBox="0 0 13 13"><circle cx="5" cy="5" r="3.8" fill="none" stroke="#1E1E1E" stroke-width="1.1"/><path d="M7.7 7.7 L11.5 11.5" stroke="#1E1E1E" stroke-width="2"/></svg>
<svg class="a" style="left:296px;top:646px;" width="6" height="4" viewBox="0 0 6 4"><path d="M0 0 H5 L2.5 3Z" fill="#555"/></svg>
<div class="a " style="left:309px;top:641px;font-size:12.5px;color:#1E1E1E">&quot;F:\אקסס\תוכנת חלב\ניהול חלוקה - עותק - עותק.accdb&quot;</div>
<svg class="a" style="left:236px;top:658px;" width="11" height="10" viewBox="0 0 11 10"><path d="M0.5 3.5 L6 0.5 L10.5 2.5 V6.5 L5 9.5 L0.5 7.5Z" fill="#1652A6"/><path d="M2 3.6 L6 1.6 L9 3 L5 5Z" fill="#FFFFFF"/></svg>
<div class="a " style="left:254px;top:657px;font-size:12px;color:#1E1E1E">(9)</div>
<svg class="a" style="left:280px;top:657px;" width="13" height="13" viewBox="0 0 13 13"><circle cx="5" cy="5" r="3.8" fill="none" stroke="#1E1E1E" stroke-width="1.1"/><path d="M7.7 7.7 L11.5 11.5" stroke="#1E1E1E" stroke-width="2"/></svg>
<svg class="a" style="left:296px;top:662px;" width="6" height="4" viewBox="0 0 6 4"><path d="M0 0 H5 L2.5 3Z" fill="#555"/></svg>
<div class="a " style="left:309px;top:657px;font-size:12.5px;color:#1E1E1E">&quot;F:\אקסס\תוכנת חלב\BackupProgram\ניהול חלוקה.mdb&quot;</div>
<svg class="a" style="left:236px;top:674px;" width="11" height="10" viewBox="0 0 11 10"><path d="M0.5 3.5 L6 0.5 L10.5 2.5 V6.5 L5 9.5 L0.5 7.5Z" fill="#1652A6"/><path d="M2 3.6 L6 1.6 L9 3 L5 5Z" fill="#FFFFFF"/></svg>
<div class="a " style="left:254px;top:673px;font-size:12px;color:#1E1E1E">(10)</div>
<svg class="a" style="left:280px;top:673px;" width="13" height="13" viewBox="0 0 13 13"><circle cx="5" cy="5" r="3.8" fill="none" stroke="#1E1E1E" stroke-width="1.1"/><path d="M7.7 7.7 L11.5 11.5" stroke="#1E1E1E" stroke-width="2"/></svg>
<svg class="a" style="left:296px;top:678px;" width="6" height="4" viewBox="0 0 6 4"><path d="M0 0 H5 L2.5 3Z" fill="#555"/></svg>
<div class="a " style="left:309px;top:673px;font-size:12.5px;color:#1E1E1E">&quot;F:\אקסס\תוכנות אקסס\אנשי קשר - אאוטלוק.mdb&quot;</div>
<svg class="a" style="left:236px;top:690px;" width="11" height="10" viewBox="0 0 11 10"><path d="M0.5 3.5 L6 0.5 L10.5 2.5 V6.5 L5 9.5 L0.5 7.5Z" fill="#1652A6"/><path d="M2 3.6 L6 1.6 L9 3 L5 5Z" fill="#FFFFFF"/></svg>
<div class="a " style="left:254px;top:689px;font-size:12px;color:#1E1E1E">(11)</div>
<svg class="a" style="left:280px;top:689px;" width="13" height="13" viewBox="0 0 13 13"><circle cx="5" cy="5" r="3.8" fill="none" stroke="#1E1E1E" stroke-width="1.1"/><path d="M7.7 7.7 L11.5 11.5" stroke="#1E1E1E" stroke-width="2"/></svg>
<svg class="a" style="left:296px;top:694px;" width="6" height="4" viewBox="0 0 6 4"><path d="M0 0 H5 L2.5 3Z" fill="#555"/></svg>
<div class="a " style="left:309px;top:689px;font-size:12.5px;color:#1E1E1E">&quot;F:\אקסס\תוכנות אקסס\המכללה ללימוד המחשב.accdb&quot;</div>
<svg class="a" style="left:236px;top:706px;" width="11" height="10" viewBox="0 0 11 10"><path d="M0.5 3.5 L6 0.5 L10.5 2.5 V6.5 L5 9.5 L0.5 7.5Z" fill="#1652A6"/><path d="M2 3.6 L6 1.6 L9 3 L5 5Z" fill="#FFFFFF"/></svg>
<div class="a " style="left:254px;top:705px;font-size:12px;color:#1E1E1E">(12)</div>
<svg class="a" style="left:280px;top:705px;" width="13" height="13" viewBox="0 0 13 13"><circle cx="5" cy="5" r="3.8" fill="none" stroke="#1E1E1E" stroke-width="1.1"/><path d="M7.7 7.7 L11.5 11.5" stroke="#1E1E1E" stroke-width="2"/></svg>
<svg class="a" style="left:296px;top:710px;" width="6" height="4" viewBox="0 0 6 4"><path d="M0 0 H5 L2.5 3Z" fill="#555"/></svg>
<div class="a " style="left:309px;top:705px;font-size:12.5px;color:#1E1E1E">&quot;F:\אקסס\תוכנות אקסס\מחשבון.accdb&quot;</div>
<svg class="a" style="left:236px;top:722px;" width="11" height="10" viewBox="0 0 11 10"><path d="M0.5 3.5 L6 0.5 L10.5 2.5 V6.5 L5 9.5 L0.5 7.5Z" fill="#1652A6"/><path d="M2 3.6 L6 1.6 L9 3 L5 5Z" fill="#FFFFFF"/></svg>
<div class="a " style="left:254px;top:721px;font-size:12px;color:#1E1E1E">(13)</div>
<svg class="a" style="left:280px;top:721px;" width="13" height="13" viewBox="0 0 13 13"><circle cx="5" cy="5" r="3.8" fill="none" stroke="#1E1E1E" stroke-width="1.1"/><path d="M7.7 7.7 L11.5 11.5" stroke="#1E1E1E" stroke-width="2"/></svg>
<svg class="a" style="left:296px;top:726px;" width="6" height="4" viewBox="0 0 6 4"><path d="M0 0 H5 L2.5 3Z" fill="#555"/></svg>
<div class="a " style="left:309px;top:721px;font-size:12.5px;color:#1E1E1E">&quot;F:\אקסס\תוכנות אקסס\פקודות שונות.accdb&quot;</div>
<svg class="a" style="left:236px;top:738px;" width="11" height="10" viewBox="0 0 11 10"><path d="M0.5 3.5 L6 0.5 L10.5 2.5 V6.5 L5 9.5 L0.5 7.5Z" fill="#1652A6"/><path d="M2 3.6 L6 1.6 L9 3 L5 5Z" fill="#FFFFFF"/></svg>
<div class="a " style="left:254px;top:737px;font-size:12px;color:#1E1E1E">(14)</div>
<svg class="a" style="left:280px;top:737px;" width="13" height="13" viewBox="0 0 13 13"><circle cx="5" cy="5" r="3.8" fill="none" stroke="#1E1E1E" stroke-width="1.1"/><path d="M7.7 7.7 L11.5 11.5" stroke="#1E1E1E" stroke-width="2"/></svg>
<svg class="a" style="left:296px;top:742px;" width="6" height="4" viewBox="0 0 6 4"><path d="M0 0 H5 L2.5 3Z" fill="#555"/></svg>
<div class="a " style="left:309px;top:737px;font-size:12.5px;color:#1E1E1E">&quot;F:\אקסס\תוכנות אקסס\שוברים 4000.accdb&quot;</div>
<div class="a" style="left:217px;top:766px;width:162px;height:20px;background:#F5F5F5;border:1px solid #9AA1AC;box-shadow:2px 2px 1px rgba(0,0,0,0.22)"></div>
<svg class="a" style="left:222px;top:772px;" width="6" height="7" viewBox="0 0 6 7"><path d="M5 0 V6 H0Z" fill="#1E1E1E"/></svg>
<div class="a" style="left:234px;top:768px;width:142px;height:16px;background:#C5CFDF;"></div>
<svg class="a" style="left:236px;top:771px;" width="11" height="10" viewBox="0 0 11 10"><path d="M0.5 3.5 L6 0.5 L10.5 2.5 V6.5 L5 9.5 L0.5 7.5Z" fill="#1652A6"/><path d="M2 3.6 L6 1.6 L9 3 L5 5Z" fill="#FFFFFF"/></svg>
<div class="a " style="left:253px;top:769px;font-size:12px;color:#555">result</div>
<div class="a" style="left:286px;top:769px;width:1px;height:14px;background:#A8B3C8;"></div>
<div class="a " style="left:290px;top:769px;font-size:12px;color:#555">Count = 258</div>
<svg class="a" style="left:361px;top:771px;" width="14" height="10" viewBox="0 0 14 10"><rect x="2" y="2.6" width="5.5" height="4" fill="#F4F4F4" stroke="#555" stroke-width="1.3"/><rect x="7" y="1" width="1.7" height="7.5" fill="#555"/><rect x="8.5" y="4" width="4" height="1.2" fill="#555"/></svg>
<div class="a" style="left:1671px;top:128px;width:7px;height:882px;background:#2E405F;"></div>
<div class="a" style="left:1678px;top:541px;width:236px;height:7px;background:#354A6B;"></div>
<div class="a" style="left:1678px;top:85px;width:236px;height:457px;background:#FFFFFF;border:1px solid #8C9BBC"></div>
<div class="a" style="left:1679px;top:86px;width:234px;height:21px;background:#4D6082;"></div>
<div class="a " style="left:1683px;top:90px;font-size:12px;color:#FFFFFF">Solution Explorer</div>
<svg class="a" style="left:1864px;top:94px;" width="10" height="6" viewBox="0 0 10 6"><path d="M0 0 H9 L4.5 5Z" fill="#FFFFFF"/></svg>
<svg class="a" style="left:1881px;top:89px;" width="8" height="12" viewBox="0 0 8 12"><path d="M1 1 H7 M2 1 V7 M6 1 V7 M0 7 H8 M4 7 V12" stroke="#FFFFFF" stroke-width="1.2" fill="none"/></svg>
<svg class="a" style="left:1897px;top:91px;" width="9" height="9" viewBox="0 0 9 9"><path d="M0.5 0.5 L8.5 8.5 M8.5 0.5 L0.5 8.5" stroke="#FFFFFF" stroke-width="1.4"/></svg>
<div class="a" style="left:1679px;top:107px;width:234px;height:28px;background:#CFD6E5;"></div>
<svg class="a" style="left:1688px;top:115px;" width="12" height="12" viewBox="0 0 12 12"><circle cx="6" cy="6" r="6" fill="#B5BAC4"/><path d="M9 6 H4 M6 3.5 L3.5 6 L6 8.5" stroke="#fff" stroke-width="1.8" fill="none"/></svg>
<svg class="a" style="left:1710px;top:115px;" width="12" height="12" viewBox="0 0 12 12"><circle cx="6" cy="6" r="6" fill="#B5BAC4"/><path d="M3 6 H8 M6 3.5 L8.5 6 L6 8.5" stroke="#fff" stroke-width="1.8" fill="none"/></svg>
<svg class="a" style="left:1730px;top:113px;" width="16" height="16" viewBox="0 0 16 16"><path d="M2.5 8 L8 2.5 L13.5 8 V15 H2.5Z" fill="#DCDCE6"/><path d="M1.2 8.5 L8 1.8 L14.8 8.5" fill="none" stroke="#333" stroke-width="1.5"/><path d="M2.7 8 V14.8 H13.3 V8" fill="none" stroke="#333" stroke-width="1.4"/><rect x="6" y="10" width="4" height="5" fill="#333"/><rect x="11" y="1.5" width="1.3" height="4" fill="#333"/></svg>
<svg class="a" style="left:1753px;top:113px;" width="16" height="16" viewBox="0 0 16 16"><rect x="6" y="3" width="9" height="6" fill="#DCA34F"/><rect x="10" y="1" width="5" height="2" fill="#DCA34F"/><rect x="11" y="2" width="3" height="1" fill="#F0DDB5"/><rect x="1.5" y="6.5" width="8" height="7" fill="#D3D3DE" stroke="#333" stroke-width="1"/><rect x="1" y="6" width="9" height="2" fill="#333"/><path d="M2.5 5 V2.5 H5" fill="none" stroke="#00539C" stroke-width="1.5"/><path d="M5 0.8 L7.5 2.5 L5 4.2Z" fill="#00539C"/><path d="M13.5 10 V12.5 H11" fill="none" stroke="#00539C" stroke-width="1.5"/><path d="M11 10.8 L8.5 12.5 L11 14.2Z" fill="#00539C"/></svg>
<svg class="a" style="left:1775px;top:120px;" width="6" height="4" viewBox="0 0 6 4"><path d="M0 0 H5 L2.5 3Z" fill="#1E1E1E"/></svg>
<div class="a" style="left:1787px;top:112px;width:1px;height:18px;background:#A5AEBE;"></div>
<svg class="a" style="left:1797px;top:113px;" width="16" height="16" viewBox="0 0 16 16"><path d="M0.5 1 H5.5 L3.5 3.5 V5.5 L2.5 4.5 V3.5Z" fill="#1E1E1E"/><circle cx="9" cy="10.5" r="4.6" fill="#D6DBE9" stroke="#1E1E1E" stroke-width="1.2"/><path d="M8.5 7.5 V11 H11.5" fill="none" stroke="#1E1E1E" stroke-width="1.2"/></svg>
<svg class="a" style="left:1817px;top:120px;" width="6" height="4" viewBox="0 0 6 4"><path d="M0 0 H5 L2.5 3Z" fill="#1E1E1E"/></svg>
<svg class="a" style="left:1831px;top:114px;" width="13" height="12" viewBox="0 0 13 12"><path d="M12 3.5 H2 M5 0.5 L1.5 3.5 L5 6.5 M1 8.5 H11 M8 5.5 L11.5 8.5 L8 11.5" fill="none" stroke="#1E1E1E" stroke-width="1.6"/></svg>
<svg class="a" style="left:1853px;top:113px;" width="13" height="14" viewBox="0 0 13 14"><path d="M10.5 7 A4.8 4.8 0 1 1 7 3" fill="none" stroke="#B0B4BE" stroke-width="1.6"/><path d="M6 0 L10 3 L6 6Z" fill="#B0B4BE"/></svg>
<svg class="a" style="left:1876px;top:115px;" width="12" height="12" viewBox="0 0 12 12"><rect x="0.5" y="4.5" width="7" height="7" fill="none" stroke="#1E1E1E" stroke-width="1"/><path d="M3 2.5 H9.5 V9 M5 0.5 H11.5 V7" fill="none" stroke="#1E1E1E" stroke-width="1"/><rect x="2" y="7.5" width="4" height="1.2" fill="#00539C"/></svg>
<div class="a" style="left:1903px;top:107px;width:9px;height:28px;background:#D9DEEA;"></div>
<svg class="a" style="left:1905px;top:112px;" width="7" height="3" viewBox="0 0 7 3"><path d="M0 0 L2 1.5 L0 3Z M4 0 L6 1.5 L4 3Z" fill="#1E1E1E"/></svg>
<div class="a" style="left:1679px;top:135px;width:234px;height:1px;background:#CFD6E5;"></div>
<div class="a" style="left:1680px;top:136px;width:232px;height:19px;background:#FCFCFC;border:1px solid #CCD5E6"></div>
<div class="a " style="left:1684px;top:139px;font-size:11.6px;color:#717171">Search Solution Explorer (Ctrl+ף)</div>
<svg class="a" style="left:1884px;top:139px;" width="13" height="13" viewBox="0 0 13 13"><circle cx="8.5" cy="4.5" r="3.5" fill="none" stroke="#555" stroke-width="1.6"/><path d="M5.8 7.2 L1 12" stroke="#555" stroke-width="2.2"/></svg>
<svg class="a" style="left:1904px;top:145px;" width="6" height="4" viewBox="0 0 6 4"><path d="M0 0 H5 L2.5 3Z" fill="#555"/></svg>
<div class="a" style="left:1679px;top:155px;width:234px;height:4px;background:#E0E4EE;"></div>
<div class="a" style="left:1679px;top:160px;width:234px;height:18px;background:#CCCEDB;"></div>
<svg class="a" style="left:1691px;top:163px;" width="15" height="14" viewBox="0 0 15 14"><rect x="0.5" y="0.5" width="14" height="13" fill="#F0EFF1" stroke="#1F5FA8" stroke-width="1"/><text x="2" y="10.5" font-size="8.5" font-family="Liberation Sans" fill="#1E1E1E" letter-spacing="-1">VB</text></svg>
<div class="a " style="left:1712px;top:163px;font-size:12.5px;color:#1E1E1E;font-weight:bold">חיפוש קבצים</div>
<svg class="a" style="left:1710px;top:181px;" width="15" height="15" viewBox="0 0 15 15"><path d="M1.8 13.2 L7.5 7.5" stroke="#1E1E1E" stroke-width="2.8" stroke-linecap="round"/><circle cx="10.2" cy="4.8" r="4.3" fill="#1E1E1E"/><path d="M10.2 4.8 L14 1" stroke="#FFFFFF" stroke-width="2.4" stroke-linecap="round"/></svg>
<div class="a " style="left:1730px;top:181px;font-size:12px;color:#1E1E1E">My Project</div>
<svg class="a" style="left:1689px;top:200px;" width="7" height="10" viewBox="0 0 7 10"><path d="M1 1 L6 5 L1 9Z" fill="none" stroke="#1E1E1E" stroke-width="1.1"/></svg>
<svg class="a" style="left:1710px;top:201px;" width="15" height="8" viewBox="0 0 15 8"><rect x="0" y="1" width="4" height="5" fill="#333"/><rect x="8" y="0" width="6" height="7" fill="#333"/><path d="M5 3.5 H7" stroke="#333" stroke-width="1"/></svg>
<div class="a " style="left:1730px;top:199px;font-size:12px;color:#1E1E1E">References</div>
<svg class="a" style="left:1710px;top:217px;" width="15" height="14" viewBox="0 0 15 14"><path d="M6 1.5 H11 L13.5 4 V11.5 H6" fill="none" stroke="#333" stroke-width="1"/><path d="M3 5 V13 M1 5 H5 V8 H1Z" fill="#333" stroke="#333" stroke-width="1.2"/></svg>
<div class="a " style="left:1730px;top:217px;font-size:12px;color:#1E1E1E">App.config</div>
<svg class="a" style="left:1689px;top:236px;" width="7" height="10" viewBox="0 0 7 10"><path d="M1 1 L6 5 L1 9Z" fill="none" stroke="#1E1E1E" stroke-width="1.1"/></svg>
<svg class="a" style="left:1710px;top:236px;" width="15" height="13" viewBox="0 0 15 13"><rect x="0.7" y="0.7" width="13" height="11.5" fill="none" stroke="#333" stroke-width="1.3"/><path d="M1 3.5 H14 M3 6.5 H6 M8 6.5 H12 M3 9 H6 M8 9 H12" stroke="#333" stroke-width="1.2"/></svg>
<div class="a " style="left:1730px;top:235px;font-size:12px;color:#1E1E1E">Form1.vb</div>
<div class="a" style="left:1678px;top:548px;width:236px;height:462px;background:#FFFFFF;border:1px solid #8C9BBC"></div>
<div class="a" style="left:1679px;top:549px;width:234px;height:21px;background:#4D6082;"></div>
<div class="a " style="left:1683px;top:553px;font-size:12px;color:#FFFFFF">Properties</div>
<svg class="a" style="left:1864px;top:557px;" width="10" height="6" viewBox="0 0 10 6"><path d="M0 0 H9 L4.5 5Z" fill="#FFFFFF"/></svg>
<svg class="a" style="left:1881px;top:552px;" width="8" height="12" viewBox="0 0 8 12"><path d="M1 1 H7 M2 1 V7 M6 1 V7 M0 7 H8 M4 7 V12" stroke="#FFFFFF" stroke-width="1.2" fill="none"/></svg>
<svg class="a" style="left:1897px;top:554px;" width="9" height="9" viewBox="0 0 9 9"><path d="M0.5 0.5 L8.5 8.5 M8.5 0.5 L0.5 8.5" stroke="#FFFFFF" stroke-width="1.4"/></svg>
<div class="a" style="left:1679px;top:570px;width:234px;height:25px;background:#FCFCFC;"></div>
<svg class="a" style="left:1904px;top:581px;" width="6" height="4" viewBox="0 0 6 4"><path d="M0 0 H5 L2.5 3Z" fill="#1E1E1E"/></svg>
<div class="a" style="left:1680px;top:595px;width:232px;height:25px;background:#CFD6E5;"></div>
<svg class="a" style="left:1686px;top:601px;" width="15" height="14" viewBox="0 0 15 14"><rect x="0" y="0" width="4" height="4" fill="#1E1E1E"/><rect x="1.5" y="1" width="1" height="2" fill="#fff"/><rect x="1" y="1.5" width="2" height="1" fill="#fff"/><rect x="0" y="9" width="4" height="4" fill="#1E1E1E"/><rect x="1.5" y="10" width="1" height="2" fill="#fff"/><rect x="1" y="10.5" width="2" height="1" fill="#fff"/><rect x="6" y="0" width="6" height="1" fill="#1E1E1E"/><rect x="6" y="2" width="6" height="1" fill="#1E1E1E"/><rect x="6" y="4" width="6" height="1" fill="#1E1E1E"/><rect x="6" y="6" width="6" height="1" fill="#1E1E1E"/><rect x="13" y="2" width="1" height="1" fill="#1E1E1E"/><rect x="13" y="4" width="1" height="1" fill="#1E1E1E"/><rect x="13" y="6" width="1" height="1" fill="#1E1E1E"/><rect x="6" y="9" width="6" height="1" fill="#1E1E1E"/><rect x="6" y="11" width="4" height="1" fill="#1E1E1E"/><rect x="13" y="12" width="1" height="1" fill="#1E1E1E"/></svg>
<div class="a" style="left:1705px;top:596px;width:23px;height:22px;background:#FBF8F0;border:1px solid #3F5A86"></div>
<svg class="a" style="left:1708px;top:599px;" width="17" height="16" viewBox="0 0 17 16"><rect x="0" y="0" width="7" height="7" fill="#444"/><text x="1" y="6.5" font-size="7" font-family="Liberation Sans" fill="#fff">A</text><text x="1" y="15" font-size="8" font-weight="bold" font-family="Liberation Sans" fill="#1E1E1E">Z</text><path d="M12 3 V13 M9 10 L12 13 L15 10" fill="none" stroke="#0038A8" stroke-width="1.6"/></svg>
<div class="a" style="left:1731px;top:598px;width:1px;height:19px;background:#8A96AE;"></div>
<svg class="a" style="left:1737px;top:600px;" width="15" height="15" viewBox="0 0 15 15"><path d="M1.8 13.2 L7.5 7.5" stroke="#8E8E8E" stroke-width="2.8" stroke-linecap="round"/><circle cx="10.2" cy="4.8" r="4.3" fill="#8E8E8E"/><path d="M10.2 4.8 L14 1" stroke="#CFD6E5" stroke-width="2.4" stroke-linecap="round"/></svg>
<div class="a" style="left:1679px;top:947px;width:234px;height:1px;background:#D4D8E2;"></div>
<div class="a" style="left:0px;top:1017px;width:1920px;height:23px;background:#CA5100;"></div>
<svg class="a" style="left:4px;top:1024px;" width="17" height="11" viewBox="0 0 17 11"><path d="M4.5 0.8 H16 L12.5 10.2 H1Z" fill="none" stroke="#FFFFFF" stroke-width="1.2"/></svg>
<div class="a " style="left:1160px;top:1022px;font-size:12px;color:#FFFFFF">Ln 58</div>
<div class="a " style="left:1252px;top:1022px;font-size:12px;color:#FFFFFF">Col 9</div>
<div class="a " style="left:1344px;top:1022px;font-size:12px;color:#FFFFFF">Ch 9</div>
<div class="a " style="left:1480px;top:1022px;font-size:12px;color:#FFFFFF">INS</div>
<svg class="a" style="left:1753px;top:1021px;" width="10" height="14" viewBox="0 0 10 14"><path d="M5 14 V2 M1 6 L5 1.5 L9 6" fill="none" stroke="#FFFFFF" stroke-width="1.5"/></svg>
<div class="a " style="left:1773px;top:1022px;font-size:12px;color:#FFFFFF">Add to Source Control</div>
<svg class="a" style="left:1896px;top:1025px;" width="8" height="5" viewBox="0 0 8 5"><path d="M0 5 L4 0 L8 5Z" fill="#FFFFFF"/></svg>
<div class="a" style="left:0px;top:1040px;width:1920px;height:40px;background:#1A3246;"></div>
<div class="a" style="left:4px;top:1040px;width:1px;height:40px;background:#6B7A88;"></div>
<svg class="a" style="left:25px;top:1052px;" width="17" height="17" viewBox="0 0 17 17"><path d="M0.8 0.8 H16.2 V12.2 H10 L8.5 14 L7 12.2 H0.8Z" fill="none" stroke="#FFFFFF" stroke-width="1.2"/></svg>
<div class="a " style="left:73px;top:1044px;font-size:12px;color:#FFFFFF">13:34</div>
<div class="a " style="left:58px;top:1062px;font-size:12px;color:#FFFFFF">30/11/2018</div>
<div class="a " style="left:131px;top:1052px;font-size:12px;color:#FFFFFF">עבר</div>
<svg class="a" style="left:162px;top:1053px;" width="17" height="13" viewBox="0 0 17 13"><path d="M1 4 H4 L8 0.8 V12.2 L4 9 H1Z" fill="none" stroke="#FFFFFF" stroke-width="1.1"/><path d="M11 4 L16 9 M16 4 L11 9" stroke="#FFFFFF" stroke-width="1.1"/></svg>
<svg class="a" style="left:189px;top:1053px;" width="17" height="14" viewBox="0 0 17 14"><path d="M1 13 A12 12 0 0 1 13 1 M4 13 A9 9 0 0 1 13 4 M7 13 A6 6 0 0 1 13 7" fill="none" stroke="#FFFFFF" stroke-width="1.1"/><circle cx="12" cy="12" r="1.5" fill="#fff"/></svg>
<svg class="a" style="left:210px;top:1053px;" width="18" height="13" viewBox="0 0 18 13"><rect x="1" y="3" width="15" height="9" fill="none" stroke="#FFFFFF" stroke-width="1.2"/><rect x="3" y="5" width="9" height="5" fill="#fff"/><path d="M3 0 V3 M6 0 V3" stroke="#fff" stroke-width="1"/></svg>
<svg class="a" style="left:236px;top:1054px;" width="14" height="9" viewBox="0 0 14 9"><path d="M1 7.5 L7 1.5 L13 7.5" fill="none" stroke="#FFFFFF" stroke-width="1.3"/></svg>
<div class="a" style="left:1483px;top:1078px;width:40px;height:2px;background:#A2C4E0;"></div>
<div class="a" style="left:1532px;top:1078px;width:40px;height:2px;background:#A2C4E0;"></div>
<div class="a" style="left:1679px;top:1078px;width:40px;height:2px;background:#A2C4E0;"></div>
<svg class="a" style="left:1492px;top:1048px;" width="22" height="22" viewBox="0 0 22 22"><rect x="2" y="6" width="9" height="9" fill="#D1281C"/><rect x="10" y="1" width="10" height="12" fill="#F6C243"/><rect x="2" y="14" width="9" height="6" fill="#5F8DC6"/><rect x="10" y="13" width="10" height="7" fill="#85BBEA"/><rect x="1" y="5" width="20" height="16" fill="none" stroke="#ccc" stroke-width="0.6"/></svg>
<svg class="a" style="left:1538px;top:1046px;" width="28" height="28" viewBox="0 0 28 28"><g transform="translate(-2,-1) scale(1.15)"><path d="M19 3 L24 5 V21 L18.5 23 L4 19 V18 L19 19Z" fill="#865FC5"/><path d="M5.8 9 V14 L9.3 11.5Z M9.3 11.5 L15 7 V16Z" fill="none" stroke="#865FC5" stroke-width="1.8" stroke-linejoin="round"/></g></svg>
<svg class="a" style="left:1588px;top:1048px;" width="24" height="22" viewBox="0 0 24 22"><rect x="8" y="1" width="15" height="20" fill="#fff"/><path d="M10 5 H21 M10 8 H21 M10 11 H21 M10 14 H21 M10 17 H21" stroke="#2B579A" stroke-width="1"/><rect x="0" y="4" width="13" height="14" fill="#2B579A"/><text x="1.5" y="15" font-size="10" font-weight="bold" font-family="Liberation Sans" fill="#fff">W</text></svg>
<svg class="a" style="left:1637px;top:1047px;" width="24" height="23" viewBox="0 0 24 23"><rect x="8" y="1" width="15" height="21" fill="#fff"/><path d="M10 5 H21 M10 9 H21 M10 13 H21 M10 17 H21 M15 2 V21" stroke="#217346" stroke-width="1"/><rect x="0" y="3" width="13" height="17" fill="#217346"/><text x="2.5" y="15" font-size="10" font-weight="bold" font-family="Liberation Sans" fill="#fff">X</text></svg>
<svg class="a" style="left:1687px;top:1048px;" width="24" height="22" viewBox="0 0 24 22"><path d="M1 2 H9 L11 4 H23 V21 H1Z" fill="#F8D775"/><rect x="1" y="6" width="22" height="15" fill="#FBE38E"/><path d="M6 21 V14 H18 V21 H15 V17 H9 V21Z" fill="#2D9FD9"/></svg>
<svg class="a" style="left:1736px;top:1050px;" width="25" height="19" viewBox="0 0 25 19"><path d="M0 7 L12.5 0 L25 7 V19 H0Z" fill="#FFFFFF"/><path d="M0 7 L12.5 13 L25 7" fill="none" stroke="#1A3246" stroke-width="1.2"/><path d="M11 10 L17 13 L13 16" fill="#1A3246"/></svg>
<svg class="a" style="left:1785px;top:1049px;" width="22" height="22" viewBox="0 0 22 22"><path d="M11 11 L1.47 5.5 A11 11 0 0 1 20.53 5.5Z" fill="#DB4437"/><path d="M11 11 L20.53 5.5 A11 11 0 0 1 11 22Z" fill="#F4C20D"/><path d="M11 11 L11 22 A11 11 0 0 1 1.47 5.5Z" fill="#0F9D58"/><circle cx="11" cy="11" r="5.2" fill="#fff"/><circle cx="11" cy="11" r="4.1" fill="#4285F4"/></svg>
<svg class="a" style="left:1838px;top:1050px;" width="18" height="18" viewBox="0 0 18 18"><circle cx="11" cy="7" r="6" fill="none" stroke="#FFFFFF" stroke-width="1.4"/><path d="M6.7 11.3 L0.7 17.3" stroke="#FFFFFF" stroke-width="1.6"/></svg>
<svg class="a" style="left:1887px;top:1051px;" width="17" height="16" viewBox="0 0 17 16"><path d="M0 2.5 L7 1.5 V7.5 H0Z M8 1.3 L17 0 V7.5 H8Z M0 8.5 H7 V14.5 L0 13.5Z M8 8.5 H17 V16 L8 14.7Z" fill="#FFFFFF"/></svg>
</body></html>
